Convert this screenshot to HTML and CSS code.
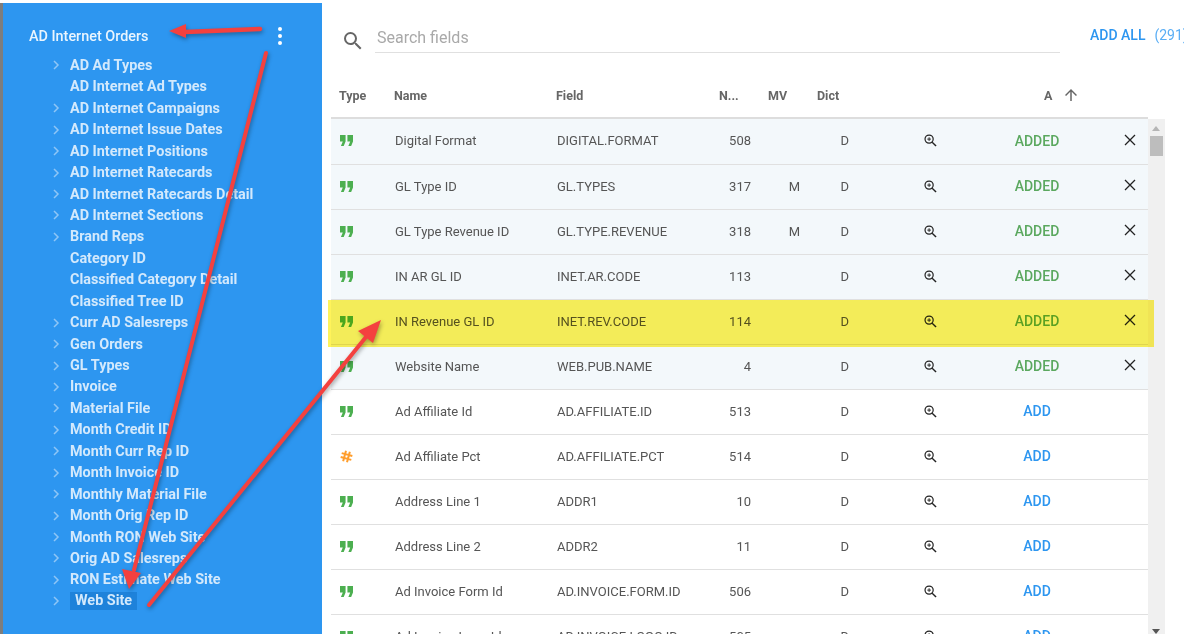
FILE: index.html

```html
<!DOCTYPE html>
<html lang="en">
<head>
  <meta charset="UTF-8" />
  <title>AD Internet Orders</title>
  <link rel="stylesheet" href="styles.css">
</head>
<body>
  <div class="frame">
    <aside class="side">
      <div class="side-head">
        <span class="side-title">AD Internet Orders</span>
        <span class="kebab"><i></i><i></i><i></i></span>
      </div>
      <ul class="tree" id="tree"></ul>
    </aside>

    <main class="main">
      <div class="searchbar">
        <svg class="search-icon" viewBox="0 0 24 24"><path d="M15.5 14h-.79l-.28-.27A6.47 6.47 0 0 0 16 9.5 6.5 6.5 0 1 0 9.5 16c1.61 0 3.09-.59 4.23-1.57l.27.28v.79l5 4.99L20.49 19l-4.99-5zm-6 0C7.01 14 5 11.99 5 9.5S7.01 5 9.5 5 14 7.01 14 9.5 11.99 14 9.5 14z"/></svg>
        <div class="search-input">Search fields</div>
        <div class="add-all"><b>ADD ALL</b><span>(291)</span></div>
      </div>

      <div class="table">
        <div class="row head">
          <div class="c-type">Type</div>
          <div class="c-name">Name</div>
          <div class="c-field">Field</div>
          <div class="c-num">N...</div>
          <div class="c-mv">MV</div>
          <div class="c-dict">Dict</div>
          <div class="c-zoom"></div>
          <div class="c-act">A <svg class="sort" viewBox="0 0 24 24"><path d="M4 12l1.41 1.41L11 7.83V20h2V7.83l5.58 5.59L20 12l-8-8-8 8z"/></svg></div>
          <div class="c-x"></div>
        </div>
        <div class="rows" id="rows"></div>
        <div class="scrollbar">
          <span class="sb-up"></span>
          <span class="sb-thumb"></span>
          <span class="sb-down"></span>
        </div>
      </div>
    </main>

    <div class="highlight"></div>

    <svg class="arrows" viewBox="0 0 1184 634" width="1184" height="634">
      <g fill="#f4413f" stroke="#f4413f" stroke-width="4" stroke-linecap="round">
        <line x1="260" y1="29" x2="185" y2="32" stroke-width="4.5"/>
        <polygon points="169,31 186,24 186,38" stroke="none"/>
        <line x1="266" y1="53" x2="134" y2="570"/>
        <polygon points="129,589 122,569 141,573" stroke="none"/>
        <line x1="149" y1="605" x2="366" y2="337"/>
        <polygon points="381,320 373,343 358,331" stroke="none"/>
      </g>
    </svg>
  </div>

  <script src="app.js"></script>
</body>
</html>
```

FILE: styles.css

```css
* { box-sizing: border-box; }
html, body { margin: 0; height: 100%; overflow: hidden; }
body { font-family: Roboto, sans-serif; background: #fff; color: #555; }

.frame { position: relative; display: flex; height: 634px; width: 1184px; overflow: hidden; border-top: 3px solid #fff; padding-left: 3px; }
.frame::before { content: ""; position: absolute; left: 0; right: 0; top: -3px; height: 2px; background: #7d7d7d; }
.frame::after { content: ""; position: absolute; left: 0; top: -3px; bottom: 0; width: 3px; background: #7d7d7d; }

/* left tree */
.side { width: 319px; flex: none; background: #2d96f0; padding: 23px 0 0 26px; }
.side-head { display: flex; align-items: center; height: 20px; margin-bottom: 8.7px; }
.side-title { width: 249px; font-size: 14.4px; font-weight: 500; color: #eaf5fe; }
.kebab { display: flex; flex-direction: column; gap: 3px; }
.kebab i { width: 4px; height: 4px; border-radius: 50%; background: #fff; }

.tree { list-style: none; margin: 0; padding: 0 0 0 18px; }
.tree li { display: flex; align-items: center; height: 21.44px; font-size: 14.4px; font-weight: 700; color: #d3e9fc; }
.chev { width: 23px; height: 10px; flex: none; fill: none; stroke: #8fc6f6; stroke-width: 1.5; }
.chev.none { stroke: none; }
.tree .sel { background: #1e82da; padding: 0 5px; height: 18px; line-height: 18px; }

/* right side */
.main { flex: 1; min-width: 0; padding-left: 9px; background: #fff; overflow: hidden; }
.searchbar { display: flex; height: 50px; position: relative; }
.search-icon { width: 24px; height: 24px; fill: #666; margin: 26px 0 0 10px; flex: none; }
.search-input { width: 685px; flex: none; height: 50px; margin-left: 10px; border-bottom: 1px solid #e0e0e0; font-size: 16px; color: #a9a9a9; padding: 25px 0 0 2px; line-height: 19px; }
.add-all { display: flex; gap: 9px; margin-left: 30px; padding-top: 24px; font-size: 14px; color: #2d96f0; white-space: nowrap; line-height: 17px; }
.add-all b { font-weight: 500; }
.add-all span { color: #5aaef5; }

.table { position: relative; width: 834px; }
.row { display: grid; grid-template-columns: 63px 163px 141px 53px 60px 39px 160px 54px 84px; align-items: center; width: 817px; border-bottom: 1px solid #e0e0e0; height: 45px; padding-bottom: 2px; font-size: 13px; color: #555; }
.rows .row:first-child { height: 46px; }
.row.head { height: 66px; padding: 20px 0 0; border-bottom: 2px solid #ddd; font-weight: 700; font-size: 12.5px; color: #666; }
.row > div:first-child { padding-left: 8px; }
.row.added { background: #f3f8fb; }
.rows .c-name { padding-left: 1px; }
.row.head .c-field { margin-left: -1px; }
.c-num { text-align: right; }
.row.head .c-num { text-align: left; padding-left: 21px; }
.c-mv { text-align: right; padding-right: 11px; }
.row.head .c-mv { text-align: left; padding: 0 0 0 17px; }
.c-dict { text-align: right; padding-right: 1px; }
.row.head .c-dict { text-align: left; padding: 0 0 0 6px; }
.c-zoom { display: flex; justify-content: center; }
.c-act { text-align: center; font-weight: 500; font-size: 14px; }
.row.head .c-act { font-size: 12.5px; font-weight: 700; display: flex; align-items: center; gap: 10px; padding-left: 34px; white-space: nowrap; }
.c-x { display: flex; justify-content: flex-end; padding: 0 12px 2px 0; }
.added-txt { color: #5ba85f; }
.add-txt { color: #2d96f0; }
.quote { width: 13px; height: 11px; fill: #4caf50; display: block; margin-left: 1px; }
.hash { width: 13px; height: 13px; display: block; stroke: #ff9d2b; fill: none; stroke-width: 2; margin-left: 1px; }
.zoom-ic { width: 13px; height: 13px; fill: none; stroke: #222; stroke-width: 1.3; }
.x-ic { width: 12px; height: 12px; stroke: #222; stroke-width: 1.3; fill: none; }
.sort { width: 18px; height: 18px; fill: #666; flex: none; }

.scrollbar { position: absolute; left: 817px; top: 66px; width: 17px; height: 520px; background: #f0f0f0; }
.sb-up, .sb-down { position: absolute; left: 4px; width: 0; height: 0; border-left: 4px solid transparent; border-right: 4px solid transparent; }
.sb-up { top: 7px; border-bottom: 5px solid #b5b5b5; }
.sb-down { top: 510px; border-top: 5px solid #555; }
.sb-thumb { position: absolute; left: 2px; right: 2px; top: 17px; height: 20px; background: #bdbdbd; }

/* annotations drawn over the screenshot */
.highlight { position: absolute; left: 328px; top: 297px; width: 826px; height: 47px; background: #fff35a; mix-blend-mode: multiply; }
.arrows { position: absolute; left: 0; top: -3px; pointer-events: none; filter: drop-shadow(1px 2px 2px rgba(0,0,0,.35)); }
```

FILE: app.js

```js
const treeItems = [
  ['AD Ad Types', 1], ['AD Internet Ad Types', 0], ['AD Internet Campaigns', 1],
  ['AD Internet Issue Dates', 1], ['AD Internet Positions', 1], ['AD Internet Ratecards', 1],
  ['AD Internet Ratecards Detail', 1], ['AD Internet Sections', 1], ['Brand Reps', 1],
  ['Category ID', 0], ['Classified Category Detail', 0], ['Classified Tree ID', 0],
  ['Curr AD Salesreps', 1], ['Gen Orders', 1], ['GL Types', 1], ['Invoice', 1],
  ['Material File', 1], ['Month Credit ID', 1], ['Month Curr Rep ID', 1],
  ['Month Invoice ID', 1], ['Monthly Material File', 1], ['Month Orig Rep ID', 1],
  ['Month RON Web Site', 1], ['Orig AD Salesreps', 1], ['RON Estimate Web Site', 1],
  ['Web Site', 1]
];

const fields = [
  ['q', 'Digital Format', 'DIGITAL.FORMAT', 508, '', 1],
  ['q', 'GL Type ID', 'GL.TYPES', 317, 'M', 1],
  ['q', 'GL Type Revenue ID', 'GL.TYPE.REVENUE', 318, 'M', 1],
  ['q', 'IN AR GL ID', 'INET.AR.CODE', 113, '', 1],
  ['q', 'IN Revenue GL ID', 'INET.REV.CODE', 114, '', 1],
  ['q', 'Website Name', 'WEB.PUB.NAME', 4, '', 1],
  ['q', 'Ad Affiliate Id', 'AD.AFFILIATE.ID', 513, '', 0],
  ['h', 'Ad Affiliate Pct', 'AD.AFFILIATE.PCT', 514, '', 0],
  ['q', 'Address Line 1', 'ADDR1', 10, '', 0],
  ['q', 'Address Line 2', 'ADDR2', 11, '', 0],
  ['q', 'Ad Invoice Form Id', 'AD.INVOICE.FORM.ID', 506, '', 0],
  ['q', 'Ad Invoice Logo Id', 'AD.INVOICE.LOGO.ID', 505, '', 0]
];

const quoteIcon = '<svg class="quote" viewBox="5 7 14 10" preserveAspectRatio="none"><path d="M6 17h3l2-4V7H5v6h3zm8 0h3l2-4V7h-6v6h3z"/></svg>';
const hashIcon = '<svg class="hash" viewBox="0 0 13 13"><path d="M4.5 1v11M8.5 1v11M1 4.5h11M1 8.5h11" transform="rotate(15 6.5 6.5)"/></svg>';
const zoomIcon = '<svg class="zoom-ic" viewBox="0 0 14 14"><circle cx="5.5" cy="5.5" r="4.4"/><path d="M3.5 5.5h4M5.5 3.5v4" stroke-width="1"/><path d="M8.8 8.8 13 13" stroke-width="1.5"/></svg>';
const xIcon = '<svg class="x-ic" viewBox="0 0 12 12"><path d="M1 1l10 10M11 1 1 11"/></svg>';

document.getElementById('tree').innerHTML = treeItems.map(([name, hasKids]) => {
  const chev = '<svg class="chev' + (hasKids ? '' : ' none') + '" viewBox="0 0 23 10"><path d="M7 1l4 4-4 4"/></svg>';
  const label = name === 'Web Site' ? '<span class="sel">' + name + '</span>' : '<span>' + name + '</span>';
  return '<li>' + chev + label + '</li>';
}).join('');

document.getElementById('rows').innerHTML = fields.map(([type, name, field, num, mv, added]) => `
  <div class="row${added ? ' added' : ''}">
    <div>${type === 'q' ? quoteIcon : hashIcon}</div>
    <div class="c-name">${name}</div>
    <div class="c-field">${field}</div>
    <div class="c-num">${num}</div>
    <div class="c-mv">${mv}</div>
    <div class="c-dict">D</div>
    <div class="c-zoom">${zoomIcon}</div>
    <div class="c-act ${added ? 'added-txt' : 'add-txt'}">${added ? 'ADDED' : 'ADD'}</div>
    <div class="c-x">${added ? xIcon : ''}</div>
  </div>`).join('');
```
